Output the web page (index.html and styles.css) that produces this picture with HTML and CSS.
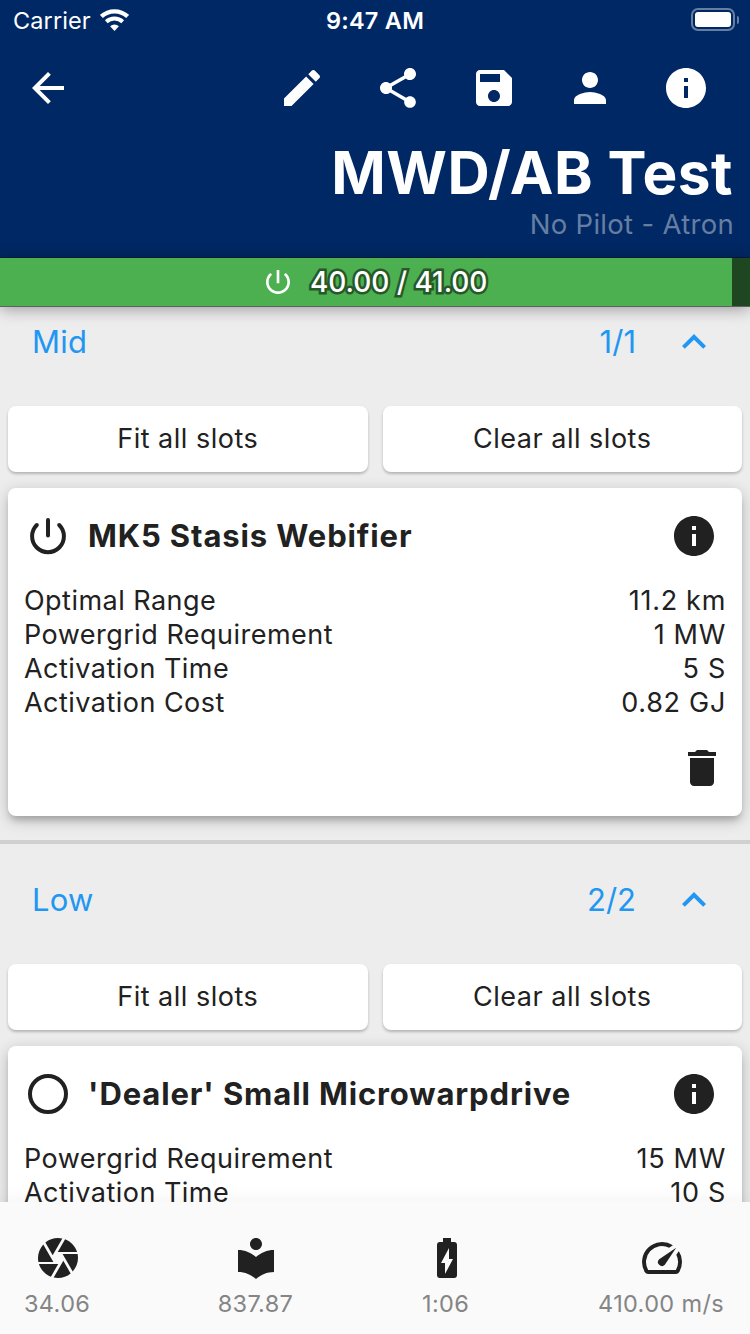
FILE: index.html
```html
<!DOCTYPE html>
<html lang="en">
<head>
<meta charset="utf-8">
<title>MWD/AB Test</title>
<link rel="stylesheet" href="styles.css">
</head>
<body>
<svg class="defs" aria-hidden="true">
  <symbol id="info" viewBox="0 0 24 24"><path d="M12 2C6.48 2 2 6.48 2 12s4.48 10 10 10 10-4.48 10-10S17.52 2 12 2zm1 15h-2v-6h2v6zm0-8h-2V7h2v2z"/></symbol>
  <symbol id="less" viewBox="0 0 24 24"><path d="M12 8l-6 6 1.41 1.41L12 10.83l4.59 4.58L18 14z"/></symbol>
</svg>
<div class="screen">
  <header class="header">
    <div class="status">
      <div class="status-left"><span class="carrier">Carrier</span>
        <svg class="wifi" viewBox="0 0 29 22"><path class="line" stroke-width="4.3" d="M1.4 7.5A19.2 19.2 0 0 1 27.6 7.5"/><path class="line" stroke-width="4" d="M6.3 12.7A12 12 0 0 1 22.7 12.7"/><path d="M14.5 22L10.1 17.2A6.4 6.4 0 0 1 18.9 17.2Z"/></svg>
      </div>
      <span class="time">9:47 AM</span>
      <div class="status-right"><span class="battery"><span class="charge"></span></span><span class="nub"></span></div>
    </div>
    <nav class="toolbar">
      <svg class="icon back" viewBox="0 0 24 24"><path d="M20 11H7.83l5.59-5.59L12 4l-8 8 8 8 1.41-1.41L7.83 13H20v-2z"/></svg>
      <svg class="icon" viewBox="0 0 24 24"><path d="M3 17.25V21h3.75L17.81 9.94l-3.75-3.75L3 17.25zM20.71 7.04c.39-.39.39-1.02 0-1.41l-2.34-2.34c-.39-.39-1.02-.39-1.41 0l-1.83 1.83 3.75 3.75 1.83-1.83z"/></svg>
      <svg class="icon" viewBox="0 0 24 24"><path d="M18 16.08c-.76 0-1.44.3-1.96.77L8.91 12.7c.05-.23.09-.46.09-.7s-.04-.47-.09-.7l7.05-4.11c.54.5 1.25.81 2.04.81 1.66 0 3-1.34 3-3s-1.34-3-3-3-3 1.34-3 3c0 .24.04.47.09.7L8.04 9.81C7.5 9.31 6.79 9 6 9c-1.66 0-3 1.34-3 3s1.34 3 3 3c.79 0 1.5-.31 2.04-.81l7.12 4.16c-.05.21-.08.43-.08.65 0 1.61 1.31 2.92 2.92 2.92s2.92-1.31 2.92-2.92-1.31-2.92-2.92-2.92z"/></svg>
      <svg class="icon" viewBox="0 0 24 24"><path d="M17 3H5c-1.11 0-2 .9-2 2v14c0 1.1.89 2 2 2h14c1.1 0 2-.9 2-2V7l-4-4zm-5 16c-1.66 0-3-1.34-3-3s1.34-3 3-3 3 1.34 3 3-1.34 3-3 3zm3-10H5V5h10v4z"/></svg>
      <svg class="icon" viewBox="0 0 24 24"><path d="M12 12c2.21 0 4-1.79 4-4s-1.79-4-4-4-4 1.79-4 4 1.79 4 4 4zm0 2c-2.67 0-8 1.34-8 4v2h16v-2c0-2.66-5.33-4-8-4z"/></svg>
      <svg class="icon"><use href="#info"/></svg>
    </nav>
    <h1 class="title">MWD/AB Test</h1>
    <p class="subtitle">No Pilot - Atron</p>
  </header>
  <div class="power">
    <svg class="power-icon" viewBox="0 0 24 24"><path d="M13 3h-2v10h2V3zm4.83 2.17l-1.42 1.42C17.99 7.86 19 9.81 19 12c0 3.87-3.13 7-7 7s-7-3.13-7-7c0-2.19 1.01-4.14 2.58-5.42L6.17 5.17C4.23 6.82 3 9.26 3 12c0 4.97 4.03 9 9 9s9-4.03 9-9c0-2.74-1.23-5.18-3.17-6.83z"/></svg>
    <span class="power-text">40.00 / 41.00</span>
  </div>
  <main class="content">
    <section class="section first">
      <div class="section-head"><span class="name">Mid</span><span class="count">1/1</span><svg class="icon"><use href="#less"/></svg></div>
      <div class="actions"><button class="btn">Fit all slots</button><button class="btn">Clear all slots</button></div>
      <article class="card">
        <div class="card-head">
          <svg class="icon" viewBox="0 0 24 24"><path class="line round" stroke-width="2" d="M12 4v7.7M6.4 6.5A7.95 7.95 0 1 0 17.6 6.5"/></svg>
          <h2 class="card-title">MK5 Stasis Webifier</h2>
          <svg class="icon"><use href="#info"/></svg>
        </div>
        <dl class="stats">
          <div class="stat"><dt>Optimal Range</dt><dd>11.2 km</dd></div>
          <div class="stat"><dt>Powergrid Requirement</dt><dd>1 MW</dd></div>
          <div class="stat"><dt>Activation Time</dt><dd>5 S</dd></div>
          <div class="stat"><dt>Activation Cost</dt><dd>0.82 GJ</dd></div>
        </dl>
        <div class="card-foot"><svg class="icon" viewBox="0 0 24 24"><path d="M6 19c0 1.1.9 2 2 2h8c1.1 0 2-.9 2-2V7H6v12zM19 4h-3.5l-1-1h-5l-1 1H5v2h14V4z"/></svg></div>
      </article>
    </section>
    <section class="section">
      <div class="section-head"><span class="name">Low</span><span class="count">2/2</span><svg class="icon"><use href="#less"/></svg></div>
      <div class="actions"><button class="btn">Fit all slots</button><button class="btn">Clear all slots</button></div>
      <article class="card">
        <div class="card-head">
          <svg class="icon" viewBox="0 0 24 24"><circle class="line" stroke-width="2" cx="12" cy="12" r="9"/></svg>
          <h2 class="card-title">'Dealer' Small Microwarpdrive</h2>
          <svg class="icon"><use href="#info"/></svg>
        </div>
        <dl class="stats">
          <div class="stat"><dt>Powergrid Requirement</dt><dd>15 MW</dd></div>
          <div class="stat"><dt>Activation Time</dt><dd>10 S</dd></div>
        </dl>
      </article>
    </section>
  </main>
  <footer class="bottom">
    <div class="metric"><svg class="icon" viewBox="0 0 24 24"><path d="M9.4 10.5l4.77-8.26C13.47 2.09 12.75 2 12 2c-2.4 0-4.6.85-6.32 2.25l3.66 6.35.06-.1zM21.54 9c-.92-2.92-3.15-5.26-6-6.34L11.88 9h9.66zm.26 1h-7.49l.29.5 4.76 8.25C21 16.97 22 14.61 22 12c0-.69-.07-1.35-.2-2zM8.54 12l-3.9-6.75C3.01 7.03 2 9.39 2 12c0 .69.07 1.35.2 2h7.49l-1.15-2zm-6.08 3c.92 2.92 3.15 5.26 6 6.34L12.12 15H2.46zm11.27 0l-3.9 6.76c.7.15 1.42.24 2.17.24 2.4 0 4.6-.85 6.32-2.25l-3.66-6.35-.93 1.6z"/></svg><span>34.06</span></div>
    <div class="metric"><svg class="icon" viewBox="0 0 24 24"><path d="M12 11.55C9.64 9.35 6.48 8 3 8v11c3.48 0 6.64 1.35 9 3.55 2.36-2.19 5.52-3.55 9-3.55V8c-3.48 0-6.64 1.35-9 3.55zM12 8c1.66 0 3-1.34 3-3s-1.34-3-3-3-3 1.34-3 3 1.34 3 3 3z"/></svg><span>837.87</span></div>
    <div class="metric"><svg class="icon" viewBox="0 0 24 24"><path d="M15.67 4H14V2h-4v2H8.33C7.6 4 7 4.6 7 5.33v15.33C7 21.4 7.6 22 8.33 22h7.33c.74 0 1.34-.6 1.34-1.33V5.33C17 4.6 16.4 4 15.67 4zM11 20v-5.5H9L13 7v5.5h2L11 20z"/></svg><span>1:06</span></div>
    <div class="metric"><svg class="icon" viewBox="0 0 24 24"><path d="M20.38 8.57l-1.23 1.85a8 8 0 0 1-.22 7.58H5.07A8 8 0 0 1 15.58 6.85l1.85-1.23A10 10 0 0 0 3.35 19a2 2 0 0 0 1.72 1h13.85a2 2 0 0 0 1.74-1 10 10 0 0 0-.27-10.44zm-9.79 6.84a2 2 0 0 0 2.83 0l5.66-8.49-8.49 5.66a2 2 0 0 0 0 2.83z"/></svg><span>410.00 m/s</span></div>
  </footer>
</div>
</body>
</html>
```
FILE: styles.css
```css
* { box-sizing: border-box; margin: 0; padding: 0; }
body { font-family: Inter, "Liberation Sans", sans-serif; font-size: 27px; font-weight: 400; color: #212121; }
.defs { display: none; }
.screen { width: 750px; height: 1334px; display: flex; flex-direction: column; overflow: hidden; background: #ededed; }
.icon { width: 48px; height: 48px; flex: none; fill: currentColor; display: block; }
.line { fill: none; stroke: currentColor; }
.round { stroke-linecap: round; }

.header { flex: none; height: 258px; background: #002864; color: #fff; border-bottom: 1px solid #001c46; }
.status { display: grid; grid-template-columns: 1fr auto 1fr; align-items: center; height: 40px; padding: 0 11px 0 13px; }
.status-left { display: flex; align-items: center; gap: 9px; }
.carrier { font-size: 23.5px; letter-spacing: 0.1px; }
.wifi { width: 29px; height: 22px; fill: currentColor; }
.time { margin-right: 2px; font-size: 23.5px; font-weight: 600; letter-spacing: 0.25px; }
.status-right { display: flex; justify-content: flex-end; align-items: center; gap: 2px; padding-bottom: 1px; }
.battery { width: 44px; height: 23px; padding: 2px; border: 2px solid #667ea2; border-radius: 7px; }
.charge { display: block; height: 15px; border-radius: 3px; background: #fff; }
.nub { width: 2px; height: 8px; border-radius: 0 2px 2px 0; background: #667ea2; }
.toolbar { display: flex; align-items: center; gap: 48px; height: 96px; padding: 0 40px 0 24px; }
.back { margin-right: auto; }
.title { height: 71px; line-height: 74px; padding-right: 17px; text-align: right; font-size: 58.5px; font-weight: 700; letter-spacing: 0.5px; white-space: nowrap; }
.subtitle { padding-right: 16px; line-height: 34px; text-align: right; color: #667ea2; font-size: 27.5px; letter-spacing: 0.3px; }

.power { flex: none; position: relative; z-index: 1; display: flex; align-items: center; gap: 16px; height: 49px; padding-left: 262px; color: #fff; background: linear-gradient(90deg, #4caf50 731.7px, #1e4620 731.7px); border-bottom: 1px solid #616161; box-shadow: 0 2px 16px rgba(0, 0, 0, .36); }
.power-icon { width: 32px; height: 32px; fill: currentColor; }
.power-text { padding-bottom: 1px; font-size: 28px; font-weight: 500; letter-spacing: -0.05px; -webkit-text-stroke: 5px #265828; paint-order: stroke fill; white-space: nowrap; }

.content { flex: 1; min-height: 0; overflow: hidden; }
.section { border-bottom: 4px solid #d0d0d0; padding: 0 8px 24px; }
.first { margin-top: -21px; }
.section-head { display: flex; align-items: center; height: 112px; padding: 0 24px; color: #2196f3; }
.name { flex: 1; padding-bottom: 2px; font-size: 31px; letter-spacing: 0.2px; }
.count { margin-right: 34px; padding-bottom: 2px; font-size: 31px; }
.actions { display: grid; grid-template-columns: 1fr 1fr; gap: 15px; padding: 8px 0 16px; }
.btn { height: 66px; padding-bottom: 2px; border: 0; border-radius: 8px; background: #fff; color: inherit; font: inherit; letter-spacing: 0.5px; box-shadow: 0 2px 3px rgba(0, 0, 0, .24); }
.card { border-radius: 8px; background: #fff; padding: 0 16px 24px; box-shadow: 0 6px 6px -2px rgba(0, 0, 0, .18), 0 4px 16px rgba(0, 0, 0, .22); }
.card-head { display: flex; align-items: center; height: 96px; padding-right: 8px; }
.card-title { flex: 1; margin-left: 16px; padding-bottom: 2px; font-size: 31px; font-weight: 700; letter-spacing: 0.88px; white-space: nowrap; }
.stat { display: flex; justify-content: space-between; height: 34px; line-height: 34px; letter-spacing: 0.47px; }
.stat dd { letter-spacing: 0.7px; }
.card-foot { display: flex; justify-content: flex-end; padding-top: 24px; }

.bottom { flex: none; position: relative; z-index: 1; display: flex; justify-content: space-between; height: 132px; padding: 32px 26px 0 24px; background: #fafafa; box-shadow: 0 -2px 16px rgba(0, 0, 0, .05); }
.metric { display: flex; flex-direction: column; align-items: center; }
.metric .icon { margin-left: 2px; }
.metric span { line-height: 44px; font-size: 23.5px; color: #858585; letter-spacing: 0.35px; white-space: nowrap; }
```
